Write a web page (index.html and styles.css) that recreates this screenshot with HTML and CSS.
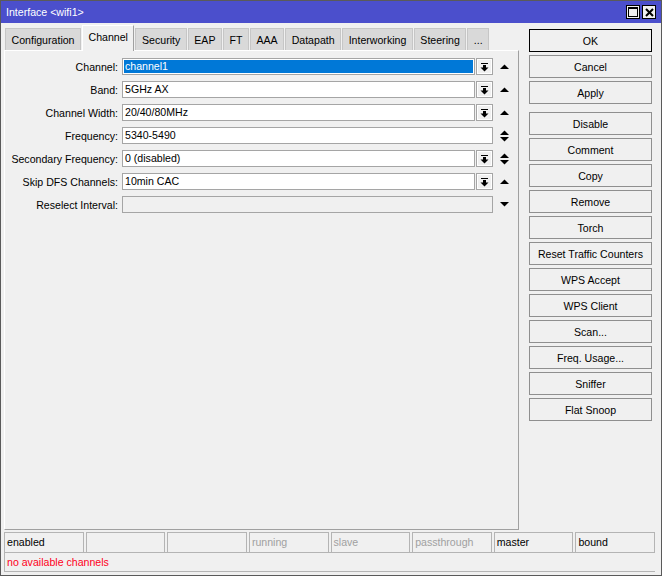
FILE: index.html
```html
<!DOCTYPE html>
<html lang="en">
<head>
    <meta charset="UTF-8">
    <title>Interface &lt;wifi1&gt;</title>
    <link rel="stylesheet" href="styles.css">
</head>
<body>
    <div class="window">
        <!-- Title bar -->
        <div class="titlebar">
            <span class="title">Interface &lt;wifi1&gt;</span>
            <div class="title-buttons">
                <div class="tbtn">
                    <svg width="10" height="10" viewBox="0 0 10 10"><rect x="0.5" y="0.5" width="9" height="9" fill="none" stroke="#000"/><rect x="0" y="0" width="10" height="2" fill="#000"/></svg>
                </div>
                <div class="tbtn">
                    <svg width="9" height="9" viewBox="0 0 9 9"><path d="M1 1 L8 8 M8 1 L1 8" stroke="#000" stroke-width="2"/></svg>
                </div>
            </div>
        </div>

        <div class="content">
            <div class="left">
                <!-- Tabs -->
                <div class="tabs">
                    <div class="tab">Configuration</div>
                    <div class="tab active">Channel</div>
                    <div class="tab">Security</div>
                    <div class="tab">EAP</div>
                    <div class="tab">FT</div>
                    <div class="tab">AAA</div>
                    <div class="tab">Datapath</div>
                    <div class="tab">Interworking</div>
                    <div class="tab">Steering</div>
                    <div class="tab">...</div>
                </div>

                <!-- Form panel -->
                <div class="panel">
                    <div class="row">
                        <div class="label">Channel:</div>
                        <div class="field selected short">channel1</div>
                        <div class="drop"><svg width="9" height="10" viewBox="0 0 9 10"><rect x="1" y="1" width="7" height="1"/><rect x="3" y="3" width="3" height="3"/><polygon points="0.5,5.5 8.5,5.5 4.5,9.5"/></svg></div>
                        <div class="arrow"><svg width="9" height="5" viewBox="0 0 9 5"><polygon points="0,5 9,5 4.5,0.5"/></svg></div>
                    </div>
                    <div class="row">
                        <div class="label">Band:</div>
                        <div class="field short">5GHz AX</div>
                        <div class="drop"><svg width="9" height="10" viewBox="0 0 9 10"><rect x="1" y="1" width="7" height="1"/><rect x="3" y="3" width="3" height="3"/><polygon points="0.5,5.5 8.5,5.5 4.5,9.5"/></svg></div>
                        <div class="arrow"><svg width="9" height="5" viewBox="0 0 9 5"><polygon points="0,5 9,5 4.5,0.5"/></svg></div>
                    </div>
                    <div class="row">
                        <div class="label">Channel Width:</div>
                        <div class="field short">20/40/80MHz</div>
                        <div class="drop"><svg width="9" height="10" viewBox="0 0 9 10"><rect x="1" y="1" width="7" height="1"/><rect x="3" y="3" width="3" height="3"/><polygon points="0.5,5.5 8.5,5.5 4.5,9.5"/></svg></div>
                        <div class="arrow"><svg width="9" height="5" viewBox="0 0 9 5"><polygon points="0,5 9,5 4.5,0.5"/></svg></div>
                    </div>
                    <div class="row">
                        <div class="label">Frequency:</div>
                        <div class="field full">5340-5490</div>
                        <div class="arrow"><svg width="9" height="12" viewBox="0 0 9 12"><polygon points="0,5 9,5 4.5,0.5"/><polygon points="0,7 9,7 4.5,11.5"/></svg></div>
                    </div>
                    <div class="row">
                        <div class="label">Secondary Frequency:</div>
                        <div class="field short">0 (disabled)</div>
                        <div class="drop"><svg width="9" height="10" viewBox="0 0 9 10"><rect x="1" y="1" width="7" height="1"/><rect x="3" y="3" width="3" height="3"/><polygon points="0.5,5.5 8.5,5.5 4.5,9.5"/></svg></div>
                        <div class="arrow"><svg width="9" height="12" viewBox="0 0 9 12"><polygon points="0,5 9,5 4.5,0.5"/><polygon points="0,7 9,7 4.5,11.5"/></svg></div>
                    </div>
                    <div class="row">
                        <div class="label">Skip DFS Channels:</div>
                        <div class="field short">10min CAC</div>
                        <div class="drop"><svg width="9" height="10" viewBox="0 0 9 10"><rect x="1" y="1" width="7" height="1"/><rect x="3" y="3" width="3" height="3"/><polygon points="0.5,5.5 8.5,5.5 4.5,9.5"/></svg></div>
                        <div class="arrow"><svg width="9" height="5" viewBox="0 0 9 5"><polygon points="0,5 9,5 4.5,0.5"/></svg></div>
                    </div>
                    <div class="row">
                        <div class="label">Reselect Interval:</div>
                        <div class="field full disabled"></div>
                        <div class="arrow"><svg width="9" height="5" viewBox="0 0 9 5"><polygon points="0,0 9,0 4.5,4.5"/></svg></div>
                    </div>
                </div>
            </div>

            <!-- Buttons -->
            <div class="buttons">
                <div class="btn default">OK</div>
                <div class="btn">Cancel</div>
                <div class="btn">Apply</div>
                <div class="btn spaced">Disable</div>
                <div class="btn">Comment</div>
                <div class="btn">Copy</div>
                <div class="btn">Remove</div>
                <div class="btn">Torch</div>
                <div class="btn">Reset Traffic Counters</div>
                <div class="btn">WPS Accept</div>
                <div class="btn">WPS Client</div>
                <div class="btn">Scan...</div>
                <div class="btn">Freq. Usage...</div>
                <div class="btn">Sniffer</div>
                <div class="btn">Flat Snoop</div>
            </div>
        </div>

        <!-- Status bar -->
        <div class="status">
            <div class="cells">
                <div class="cell">enabled</div>
                <div class="cell"></div>
                <div class="cell"></div>
                <div class="cell dim">running</div>
                <div class="cell dim">slave</div>
                <div class="cell dim">passthrough</div>
                <div class="cell">master</div>
                <div class="cell">bound</div>
            </div>
            <div class="message">no available channels</div>
        </div>
    </div>
</body>
</html>
```

FILE: styles.css
```css
/* Winbox style interface window */
body {
    margin: 0;
    background-color: #f0f0f0;
    font-family: 'Liberation Sans', Arial, sans-serif;
    font-size: 10.6px;
    color: #000;
}

.window {
    width: 662px;
    height: 576px;
    box-sizing: border-box;
    border: 1px solid #5a5a5a;
    display: flex;
    flex-direction: column;
    background-color: #f0f0f0;
}

.titlebar {
    height: 22px;
    flex-shrink: 0;
    background-color: #4b4fcc;
    color: #fff;
    display: flex;
    align-items: center;
    padding-left: 5px;
}

.title-buttons {
    margin-left: auto;
    margin-right: 5px;
    display: flex;
    gap: 2px;
}

.tbtn {
    width: 14px;
    height: 14px;
    box-sizing: border-box;
    border: 1px solid #000;
    background-color: #f0f0f0;
    display: flex;
    align-items: center;
    justify-content: center;
}

.content {
    display: flex;
    height: 507px;
    flex-shrink: 0;
}

.left {
    width: 515px;
    margin-left: 3px;
    padding-top: 2px;
}

.tabs {
    height: 25px;
    display: flex;
    align-items: flex-end;
    padding-left: 1px;
}

.tab {
    height: 22px;
    box-sizing: border-box;
    padding: 0 5.5px;
    background-color: #d9d9d9;
    border: 1px solid #c6c6c6;
    border-bottom: none;
    display: flex;
    align-items: center;
    margin-right: 1px;
}

.tab.active {
    height: 26px;
    margin-bottom: -1px;
    background-color: #f0f0f0;
    border-top: 1px solid #fff;
    border-left: 1px solid #fff;
    border-right: 1px solid #a0a0a0;
    padding-bottom: 4px;
    position: relative;
    z-index: 1;
}

.panel {
    height: 480px;
    box-sizing: border-box;
    border-top: 1px solid #fff;
    border-left: 1px solid #fff;
    border-right: 1px solid #a0a0a0;
    border-bottom: 1px solid #a0a0a0;
    padding-top: 4px;
}

.row {
    height: 23px;
    display: flex;
    align-items: center;
}

.label {
    width: 113px;
    text-align: right;
    margin-right: 4px;
    white-space: nowrap;
}

.field {
    height: 17px;
    box-sizing: border-box;
    border: 1px solid #a5a5a5;
    background-color: #fff;
    padding-left: 2px;
    line-height: 15px;
}

.field.short {
    width: 353px;
}

.field.full {
    width: 371px;
}

.field.selected {
    background-color: #0078d7;
    color: #fff;
    box-shadow: inset 0 0 0 1px #fff;
}

.field.disabled {
    background-color: #f0f0f0;
}

.drop {
    width: 17px;
    height: 17px;
    box-sizing: border-box;
    margin-left: 1px;
    border: 1px solid #a5a5a5;
    background-color: #f0f0f0;
    box-shadow: inset 0 0 0 1px #fff;
    display: flex;
    align-items: center;
    justify-content: center;
}

.arrow {
    width: 16px;
    margin-left: 3px;
    display: flex;
    justify-content: center;
}

.buttons {
    margin-left: 10px;
    padding-top: 6px;
    width: 123px;
    display: flex;
    flex-direction: column;
    gap: 3px;
}

.btn {
    height: 23px;
    box-sizing: border-box;
    border: 1px solid #8f8f8f;
    background-color: #f0f0f0;
    display: flex;
    align-items: center;
    justify-content: center;
    white-space: nowrap;
}

.btn.default {
    border: 1px solid #000;
}

.btn.spaced {
    margin-top: 5px;
}

.status {
    margin: 2px 6px 0 3px;
    height: 40px;
}

.cells {
    display: grid;
    grid-template-columns: repeat(8, 1fr);
    gap: 2px;
}

.cell {
    height: 20px;
    box-sizing: border-box;
    border: 1px solid #b4b4b4;
    border-bottom: none;
    padding-left: 2px;
    line-height: 19px;
}

.cell.dim {
    color: #a0a0a0;
}

.message {
    height: 20px;
    box-sizing: border-box;
    border: 1px solid #b4b4b4;
    border-right: none;
    padding-left: 2px;
    line-height: 18px;
    color: #ff0022;
}
```
